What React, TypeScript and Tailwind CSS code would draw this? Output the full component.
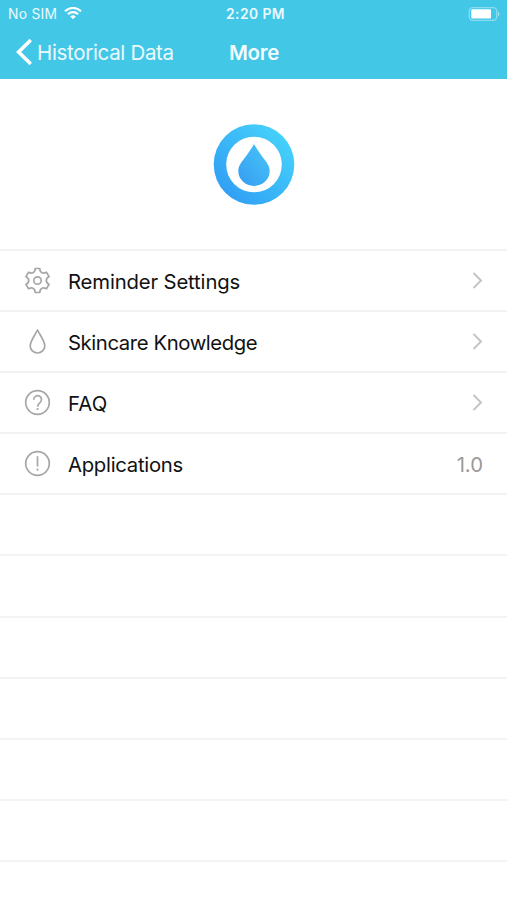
import type { ReactNode } from 'react';

interface MenuItem {
  label: string;
  labelClass: string;
  icon: ReactNode;
  value?: string;
}

const MENU: MenuItem[] = [
  { label: 'Reminder Settings', labelClass: 'tracking-[-0.14px]', icon: <GearIcon /> },
  { label: 'Skincare Knowledge', labelClass: 'tracking-[-0.4px]', icon: <DropIcon /> },
  { label: 'FAQ', labelClass: 'tracking-[0.1px]', icon: <QuestionIcon /> },
  { label: 'Applications', labelClass: 'tracking-[-0.27px]', icon: <InfoIcon />, value: '1.0' },
];

const EMPTY_ROWS = 6;

export default function App() {
  return (
    <div className="flex h-[900px] w-[507px] flex-col overflow-hidden bg-white font-['Inter',sans-serif]">
      <header className="flex h-[79px] shrink-0 flex-col bg-[#42c7e7] text-white">
        <StatusBar />
        <NavBar />
      </header>
      <div className="flex h-[170px] shrink-0 items-center justify-center pt-px">
        <Logo />
      </div>
      <ul className="border-t-2 border-[#f2f2f2]">
        {MENU.map((item) => (
          <MenuRow key={item.label} item={item} />
        ))}
        {Array.from({ length: EMPTY_ROWS }, (_, i) => (
          <li key={i} className="h-[61.1px] border-b-2 border-[#f3f3f3]" />
        ))}
      </ul>
    </div>
  );
}

function StatusBar() {
  return (
    <div className="grid h-7 grid-cols-3 items-center pl-2 pr-[7px] text-[13.8px] leading-none">
      <div className="flex items-center gap-[7px]">
        <span className="pt-px tracking-[0.3px] text-white/90">No SIM</span>
        <WifiIcon />
      </div>
      <span className="pl-[3px] pt-0.5 text-center font-semibold tracking-[0.45px] text-white/90">2:20 PM</span>
      <div className="flex justify-end">
        <BatteryIcon />
      </div>
    </div>
  );
}

function NavBar() {
  return (
    <nav className="grid h-12 grid-cols-[190px_128px_1fr] items-center text-[20.5px] leading-none">
      <button className="flex items-center gap-1 pl-4">
        <svg width="17" height="28" viewBox="0 0 17 28" fill="none" stroke="#fff" strokeWidth="3.6">
          <path d="M14.800 2 2.600 14l12.200 12" />
        </svg>
        <span className="whitespace-nowrap pt-0.5 tracking-[-0.32px] text-white/90">Historical Data</span>
      </button>
      <h1 className="pt-0.5 text-center font-semibold tracking-[-0.3px] text-white/95">More</h1>
    </nav>
  );
}

function MenuRow({ item }: { item: MenuItem }) {
  return (
    <li className="flex h-[61.1px] items-center border-b-2 border-[#f2f2f2] px-6">
      <span className="flex w-[27px] justify-center pb-px">{item.icon}</span>
      <span className={`ml-[17px] flex-1 pt-[2.8px] text-[20.3px] leading-none text-[#111] ${item.labelClass}`}>
        {item.label}
      </span>
      {item.value ? (
        <span className="pt-0.5 text-[20.3px] leading-none text-[#999]">{item.value}</span>
      ) : (
        <svg width="11" height="17" viewBox="0 0 11 17" fill="none" stroke="#c4c4c4" strokeWidth="2">
          <path d="m1.500 1 7.500 7.500L1.500 16" />
        </svg>
      )}
    </li>
  );
}

function Logo() {
  return (
    <svg width="82" height="82" viewBox="0 0 82 82">
      <defs>
        <linearGradient id="ring" x1="0.1" y1="0.9" x2="0.85" y2="0.15">
          <stop offset="0" stopColor="#309df4" />
          <stop offset="1" stopColor="#45d0fb" />
        </linearGradient>
        <linearGradient id="drop" x1="0.15" y1="1" x2="0.85" y2="0.2">
          <stop offset="0" stopColor="#379ff2" />
          <stop offset="1" stopColor="#44bff6" />
        </linearGradient>
      </defs>
      <circle cx="41" cy="40.5" r="40.3" fill="url(#ring)" />
      <circle cx="41" cy="40.5" r="27.8" fill="#fff" />
      <path
        d="M41 20c-1.500 3-4 6.500-7.500 11.500C29 37.500 25.300 41.500 25.300 47a15.700 15 0 0 0 31.400 0C56.700 41.500 53 37.500 48.500 31.500 45 26.500 42.500 23 41 20Z"
        fill="url(#drop)"
      />
    </svg>
  );
}

function WifiIcon() {
  return (
    <svg width="18" height="13" viewBox="0 0 18 13" fill="none" stroke="#fff" strokeWidth="2.200">
      <path d="M1 4.200a11.500 11.500 0 0 1 16 0" />
      <path d="M3.900 7.200a7.300 7.300 0 0 1 10.200 0" />
      <path d="M6.200 9.500a4 4 0 0 1 5.600 0L9 12.300Z" fill="#fff" stroke="none" />
    </svg>
  );
}

function BatteryIcon() {
  return (
    <svg width="32" height="15" viewBox="0 0 32 15">
      <rect x="1.300" y="0.700" width="27.400" height="12.600" rx="3.500" fill="none" stroke="#fff" strokeOpacity="0.400" strokeWidth="1.300" />
      <rect x="3.300" y="2.300" width="19.700" height="9.300" rx="1" fill="#fff" />
      <path d="M30 4.700v4.600c1.800-.7 1.800-3.900 0-4.600Z" fill="#fff" fillOpacity="0.500" />
    </svg>
  );
}

function GearIcon() {
  return (
    <svg width="27" height="27" viewBox="0 0 27 27" fill="none" stroke="#a6a6a6" strokeWidth="1.700" strokeLinejoin="round">
      <path d="M11.200 1.500h4.600q.1 3.300 2.300 4.300 1.500.8 4.300-.6l2.700 4.400q-3 1.700-2.800 3.900-.2 2.200 2.800 3.900l-2.700 4.400q-2.800-1.400-4.300-.6-2.200 1-2.300 4.300h-4.600q-.1-3.300-2.300-4.300-1.500-.8-4.300.6l-2.700-4.400q3-1.700 2.800-3.900.2-2.200-2.800-3.900l2.700-4.400q2.800 1.400 4.300.6 2.200-1 2.300-4.300Z" />
      <circle cx="13.500" cy="13.500" r="3.700" />
    </svg>
  );
}

function DropIcon() {
  return (
    <svg width="27" height="27" viewBox="0 0 27 27" fill="none" stroke="#a6a6a6" strokeWidth="1.700" strokeLinejoin="round">
      <path d="M13.500 2C11 7.200 6.200 12.800 6.200 18a7.300 7 0 0 0 14.600 0c0-5.200-4.800-10.800-7.300-16Z" />
    </svg>
  );
}

function QuestionIcon() {
  return (
    <svg width="27" height="27" viewBox="0 0 27 27" fill="none" stroke="#a6a6a6" strokeWidth="1.700">
      <circle cx="13.500" cy="13.500" r="11.800" />
      <path d="M9.700 10.700a3.900 3.900 0 1 1 6.300 3c-1.700 1.300-2.400 1.900-2.400 4" />
      <circle cx="13.600" cy="20" r="1.100" fill="#a6a6a6" stroke="none" />
    </svg>
  );
}

function InfoIcon() {
  return (
    <svg width="27" height="27" viewBox="0 0 27 27" fill="none" stroke="#a6a6a6" strokeWidth="1.700">
      <circle cx="13.500" cy="13.500" r="11.800" />
      <path d="M13.500 6.200v10.300" />
      <circle cx="13.500" cy="19.700" r="1.100" fill="#a6a6a6" stroke="none" />
    </svg>
  );
}
